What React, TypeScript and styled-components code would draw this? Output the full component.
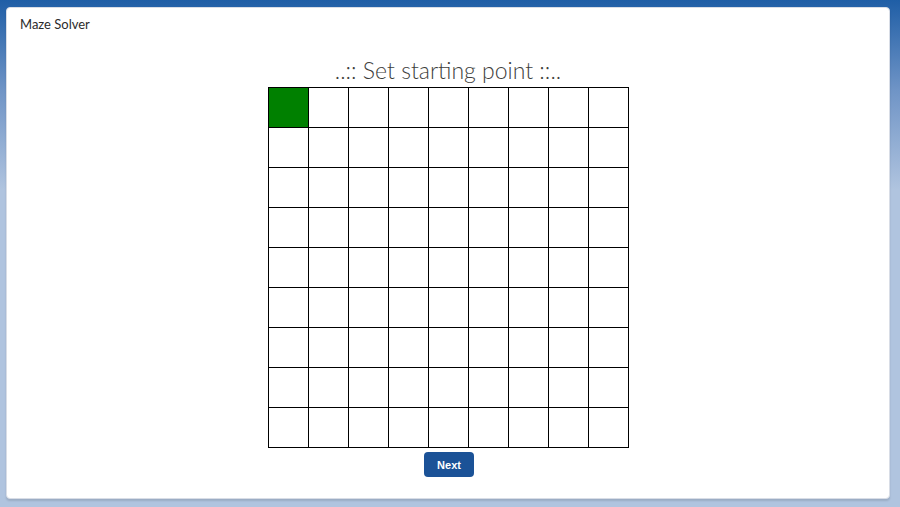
import React from "react";
import styled, { createGlobalStyle } from "styled-components";

const Global = createGlobalStyle`
  html, body { margin: 0; padding: 0; height: 100%; }
  body {
    background: linear-gradient(180deg, #1f5ea6 0px, #6f94c6 90px, #b0c4df 190px, #b0c4df 100%);
    font-family: Lato, "Noto Sans", "Liberation Sans", sans-serif;
  }
  #root { height: 100%; }
`;

const Page = styled.div`
  box-sizing: border-box;
  height: 507px;
  padding: 7px 10px 8px 6px;
  display: flex;
`;

const Card = styled.div`
  flex: 1;
  background: #fff;
  border-radius: 4px;
  box-shadow: 0 2px 2px rgba(0, 0, 0, 0.12);
  border: 1px solid #d8dde6;
  display: flex;
  flex-direction: column;
`;

const Header = styled.div`
  padding: 7px 13px 0 13px;
  font-size: 13px;
  color: #2b2b2b;
  height: 20px;
  line-height: 18px;
`;

const Body = styled.div`
  display: flex;
  flex-direction: column;
  align-items: center;
`;

const Title = styled.h2`
  margin: 21px 0 0 0;
  font-weight: 300;
  font-size: 23px;
  line-height: 28px;
  color: #3e3e3c;
  height: 31px;
`;

const Grid = styled.div`
  display: grid;
  grid-template-columns: repeat(9, 39px);
  grid-auto-rows: 39px;
  gap: 1px;
  background: #000;
  border: 1px solid #000;
`;

const Cell = styled.div<{ $start?: boolean }>`
  background: ${(p) => (p.$start ? "#008000" : "#fff")};
`;

const Button = styled.button`
  margin: 4px 0 0 2px;
  width: 50px;
  height: 25px;
  border: none;
  border-radius: 4px;
  background: #1b5297;
  color: #fff;
  font-family: "Liberation Sans", Arial, sans-serif;
  font-weight: 700;
  font-size: 11px;
  cursor: pointer;
`;

export default function App() {
  const cells = Array.from({ length: 81 }, (_, i) => i);
  return (
    <>
      <Global />
      <Page>
        <Card>
          <Header>Maze Solver</Header>
          <Body>
            <Title>..:: Set starting point ::..</Title>
            <Grid>
              {cells.map((i) => (
                <Cell key={i} $start={i === 0} />
              ))}
            </Grid>
            <Button>Next</Button>
          </Body>
        </Card>
      </Page>
    </>
  );
}
